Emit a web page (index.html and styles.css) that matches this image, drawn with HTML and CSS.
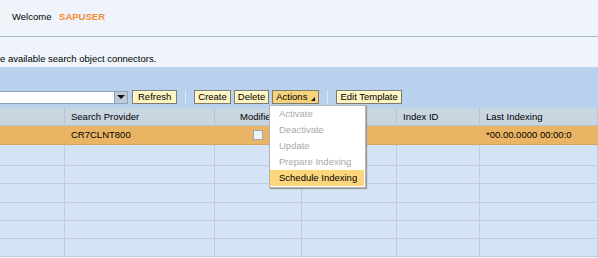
FILE: index.html
```html
<!DOCTYPE html>
<html>
  <head>
    <title>Search Object Connectors</title>
    <link rel="stylesheet" href="styles.css">
  </head>
  <body>
    <div class="top">
      <span class="welcome">Welcome</span>
      <span class="user">SAPUSER</span>
    </div>
    <div class="intro">e available search object connectors.</div>
    <div class="panel">
      <div class="toolbar">
        <div class="combo">
          <div class="combo-field"></div>
          <div class="combo-btn"><span class="down"></span></div>
        </div>
        <button class="btn btn-wide">Refresh</button>
        <span class="sep"></span>
        <button class="btn">Create</button>
        <button class="btn">Delete</button>
        <button class="btn btn-open">Actions <span class="corner"></span></button>
        <span class="sep"></span>
        <button class="btn">Edit Template</button>
      </div>
      <div class="grid">
        <div class="cell head"></div>
        <div class="cell head">Search Provider</div>
        <div class="cell head center">Modified</div>
        <div class="cell head"></div>
        <div class="cell head">Index ID</div>
        <div class="cell head">Last Indexing</div>

        <div class="cell sel"></div>
        <div class="cell sel">CR7CLNT800</div>
        <div class="cell sel center"><span class="check"></span></div>
        <div class="cell sel"></div>
        <div class="cell sel"></div>
        <div class="cell sel">*00.00.0000 00:00:0</div>

        <div class="cell"></div><div class="cell"></div><div class="cell"></div>
        <div class="cell"></div><div class="cell"></div><div class="cell"></div>
        <div class="cell"></div><div class="cell"></div><div class="cell"></div>
        <div class="cell"></div><div class="cell"></div><div class="cell"></div>
        <div class="cell"></div><div class="cell"></div><div class="cell"></div>
        <div class="cell"></div><div class="cell"></div><div class="cell"></div>
        <div class="cell"></div><div class="cell"></div><div class="cell"></div>
        <div class="cell"></div><div class="cell"></div><div class="cell"></div>
        <div class="cell"></div><div class="cell"></div><div class="cell"></div>
        <div class="cell"></div><div class="cell"></div><div class="cell"></div>
        <div class="cell"></div><div class="cell"></div><div class="cell"></div>
        <div class="cell"></div><div class="cell"></div><div class="cell"></div>
      </div>
      <div class="menu">
        <div class="item off">Activate</div>
        <div class="item off">Deactivate</div>
        <div class="item off">Update</div>
        <div class="item off">Prepare Indexing</div>
        <div class="item hover">Schedule Indexing</div>
      </div>
    </div>
  </body>
</html>
```

FILE: styles.css
```css
body {
  margin: 0;
  width: 598px;
  height: 258px;
  overflow: hidden;
  font-family: "Liberation Sans", Arial, sans-serif;
  font-size: 9.5px;
  color: #000;
  background-color: #eff4fb;
}
.top {
  height: 37px;
  box-sizing: border-box;
  padding: 11px 0 0 12px;
  line-height: 12px;
  border-bottom: 1px solid #a9b7c7;
}
.user {
  margin-left: 5px;
  color: #f58b35;
  font-weight: bold;
}
.intro {
  height: 30px;
  box-sizing: border-box;
  padding-top: 16px;
  line-height: 11px;
}
.panel {
  position: relative;
  background-color: #b8d2ee;
  padding-top: 23px;
  height: 190px;
  box-sizing: border-box;
  overflow: hidden;
}
.toolbar {
  display: flex;
  align-items: center;
  height: 14px;
  margin-bottom: 4px;
}
.combo {
  display: flex;
  margin-left: -2px;
  margin-right: 4px;
}
.combo-field {
  width: 117px;
  height: 13px;
  box-sizing: border-box;
  background-color: white;
  border: 1px solid #8ea3bb;
}
.combo-btn {
  width: 13px;
  height: 13px;
  box-sizing: border-box;
  background-color: #bfc9d5;
  border: 1px solid #8ea3bb;
  border-left: none;
  display: flex;
  align-items: center;
  justify-content: center;
}
.down {
  width: 0;
  height: 0;
  border-left: 4px solid transparent;
  border-right: 4px solid transparent;
  border-top: 4px solid #111;
}
.btn {
  font-family: "Liberation Sans", Arial, sans-serif;
  font-size: 9.5px;
  color: #000;
  height: 14px;
  padding: 0 3px;
  margin: 0 3px 0 0;
  line-height: 12px;
  background-color: #fdf4c1;
  border: 1px solid #7d7d6a;
  box-shadow: inset 1px 1px 0 #fffbe3;
  display: flex;
  align-items: center;
}
.btn-wide {
  padding: 0 5px;
}
.btn-open {
  background-color: #f6d27a;
  box-shadow: none;
}
.corner {
  width: 0;
  height: 0;
  margin-left: 4px;
  margin-top: 3px;
  border-left: 4px solid transparent;
  border-bottom: 4px solid #111;
}
.sep {
  width: 1px;
  height: 14px;
  margin: 0 8px 0 5px;
  background-color: #dde8f4;
}
.grid {
  display: grid;
  grid-template-columns: 65px 150px 87px 95px 83px 1fr;
  grid-template-rows: 18px 19px 21px;
  grid-auto-rows: 18.3px;
}
.cell {
  box-sizing: border-box;
  border-right: 1px solid #c3cbd8;
  border-bottom: 1px solid #c3cbd8;
  background-color: #d4e3f6;
  padding-left: 6px;
  line-height: 17px;
  white-space: nowrap;
  overflow: hidden;
}
.head {
  background-color: #c9d5e1;
  border-color: #b6c3d1;
}
.sel {
  background-color: #e9b565;
  border-right-color: #e9b565;
  border-bottom-color: #d8a55a;
  line-height: 18px;
}
.center {
  padding-left: 0;
  text-align: center;
}
.check {
  display: inline-block;
  width: 10px;
  height: 10px;
  box-sizing: border-box;
  margin-top: 4px;
  vertical-align: top;
  background-color: #eef3f9;
  border: 1px solid #9aa7b6;
}
.menu {
  position: absolute;
  left: 269px;
  top: 38px;
  width: 97px;
  box-sizing: border-box;
  padding: 0 1px 1px 0;
  background-color: white;
  border: 1px solid #b3b3b3;
  box-shadow: 1px 1px 1px #9a9a9a;
}
.item {
  height: 16px;
  line-height: 16px;
  padding-left: 9px;
  white-space: nowrap;
}
.off {
  color: #a9a9a9;
}
.hover {
  background-color: #fcd67c;
  color: #000;
}
```
